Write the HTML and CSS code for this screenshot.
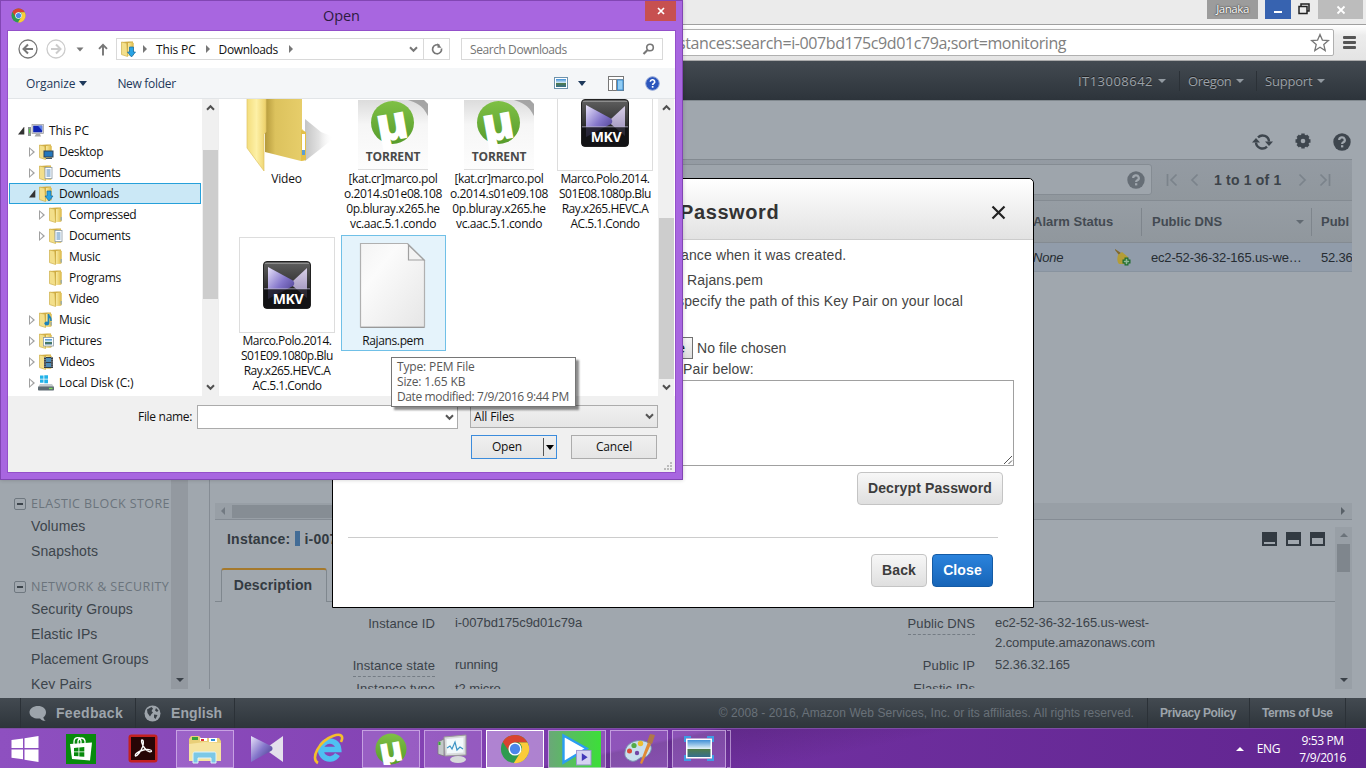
FILE: index.html
```html
<!DOCTYPE html>
<html lang="en">
<head>
<meta charset="utf-8">
<title>EC2 Management Console</title>
<link rel="stylesheet" href="styles.css">
</head>
<body>
<svg width="0" height="0" class="defs">
  <defs>
    <linearGradient id="gold" x1="0" x2="1"><stop offset="0" stop-color="#f8e9a0"/><stop offset=".5" stop-color="#ecd271"/><stop offset="1" stop-color="#d9b647"/></linearGradient>
    <linearGradient id="goldBig" x1="0" x2="1"><stop offset="0" stop-color="#b59a3c"/><stop offset=".25" stop-color="#dcc25d"/><stop offset="1" stop-color="#e8cf6c"/></linearGradient>
    <linearGradient id="flap" x1="0" x2="1"><stop offset="0" stop-color="#f3dd7c"/><stop offset=".5" stop-color="#fdf0a6"/><stop offset="1" stop-color="#ecd068"/></linearGradient>
    <linearGradient id="black" x2="0" y2="1"><stop offset="0" stop-color="#606060"/><stop offset=".55" stop-color="#2e2e2e"/><stop offset=".58" stop-color="#151515"/><stop offset="1" stop-color="#111"/></linearGradient>
    <linearGradient id="violet" x1="0" x2="1" y2="1"><stop offset="0" stop-color="#e9e4fa"/><stop offset=".5" stop-color="#8577cb"/><stop offset="1" stop-color="#3f3283"/></linearGradient>
    <linearGradient id="lilac" x1="0" x2="0" y2="1"><stop offset="0" stop-color="#d9d0e8"/><stop offset="1" stop-color="#9488b5"/></linearGradient>
    <linearGradient id="green" x2="0" y2="1"><stop offset="0" stop-color="#7fc045"/><stop offset="1" stop-color="#569c2c"/></linearGradient>
    <linearGradient id="paper" x2="1" y2="1"><stop offset="0" stop-color="#f4f4f4"/><stop offset=".3" stop-color="#fbfbfb"/><stop offset="1" stop-color="#e6e6e6"/></linearGradient>
    <linearGradient id="tbg" x2="0" y2="1"><stop offset="0" stop-color="#dcdcdc"/><stop offset=".35" stop-color="#f6f6f6"/><stop offset="1" stop-color="#fdfdfd"/></linearGradient>
    <linearGradient id="sky" x2="0" y2="1"><stop offset="0" stop-color="#3f8fd8"/><stop offset=".5" stop-color="#dceef6"/><stop offset=".55" stop-color="#4f7a4d"/><stop offset="1" stop-color="#356f8e"/></linearGradient>
    <linearGradient id="shade" x1="0" x2="1"><stop offset="0" stop-color="#c4c4c4"/><stop offset=".5" stop-color="#e2e2e2"/><stop offset="1" stop-color="#fff" stop-opacity="0"/></linearGradient>
    <symbol id="folder" viewBox="0 0 16 16">
      <path d="M1.500 1L9 .5h4v14H7z" fill="#cfab40"/><path d="M8 2l4.700-.8 1 1v12L8 15z" fill="url(#gold)"/><path d="M1.500 1l5.300 1.200.8 13.300-6.100-1.900z" fill="#f3df8a" stroke="#cfb04c" stroke-width=".7"/><path d="M12.600 10h1.200v3.500h-1.200z" fill="#8fa9b5"/>
    </symbol>
    <symbol id="chrome" viewBox="0 0 32 32">
      <circle cx="16" cy="16" r="15" fill="#2e9b4f"/>
      <path d="M3 8.500A15 15 0 0 1 29.300 9H16a7 7 0 0 0-6.400 9.500z" fill="#d9432f"/>
      <path d="M29.300 9a15 15 0 0 1-14.600 22l7.200-11.500A7 7 0 0 0 20 9z" fill="#fbcb3a"/>
      <circle cx="16" cy="16" r="7" fill="#fff"/><circle cx="16" cy="16" r="5.500" fill="#4b86ea"/>
    </symbol>
    <symbol id="chev" viewBox="0 0 10 8"><path d="M1 1.500l4 4 4-4" fill="none" stroke="currentColor" stroke-width="2.300"/></symbol>
    <symbol id="help" viewBox="0 0 18 18"><circle cx="9" cy="9" r="8.700" fill="currentColor"/><path d="M6.200 7a2.800 2.600 0 1 1 4.200 2.200c-.9.600-1.300.9-1.300 1.900" fill="none" stroke="#a0a7ae" stroke-width="2.200"/><rect x="8" y="12.200" width="2.300" height="2.200" fill="#a0a7ae"/></symbol>
    <symbol id="mkv" viewBox="0 0 48 48">
      <rect x=".5" y=".5" width="47" height="47" rx="3.500" fill="url(#black)" stroke="#222"/>
      <path d="M2 2.500h44" stroke="#999" stroke-width=".8"/>
      <path d="M44 7v30L31 26c-3-2-3-4 0-7z" fill="url(#lilac)"/>
      <path d="M5 6l24 13c2.500 1.500 3 4 1 6L5 38z" fill="url(#violet)"/>
      <path d="M1 28h46v19H1z" fill="#121216" opacity=".82"/><path d="M1 27.800h46" stroke="#b8b3cc" stroke-width=".8"/>
      <text x="25" y="42.500" text-anchor="middle" class="mkv-text">MKV</text>
    </symbol>
    <symbol id="torrent" viewBox="0 0 70 70">
      <path d="M0 0h66l4 4v66H0z" fill="url(#tbg)"/><path d="M50 0h16l4 4v12C64 4 58 3 50 0z" fill="#8b8b8b" opacity=".7"/>
      <path d="M0 69.500h70" stroke="#ddd"/>
      <circle cx="34.500" cy="22.500" r="21.500" fill="url(#green)"/>
      <text x="34.500" y="35" text-anchor="middle" transform="translate(0 5) rotate(-10 35 23)" class="mu-text">µ</text>
      <text x="35" y="61" text-anchor="middle" class="tor-text">TORRENT</text>
    </symbol>
  </defs>
</svg>

<div class="browser">
  <div class="tabstrip">
    <span class="user">Janaka</span>
    <span class="win-min"><i></i></span>
    <svg class="win-max" width="12" height="12" viewBox="0 0 12 12"><path d="M3 3V1h8v7H9M1 3.500h8v7H1z" fill="none" stroke="#222" stroke-width="1.500"/></svg>
    <span class="win-x"><svg width="10" height="10" viewBox="0 0 10 10"><path d="M1.500 1.500l7 7m0-7l-7 7" stroke="#fff" stroke-width="1.800"/></svg></span>
  </div>
  <div class="omnibar">
    <div class="omnibox"><span class="url">stances:search=i-007bd175c9d01c79a;sort=monitoring</span>
      <svg width="20" height="19" viewBox="0 0 20 19"><path d="M10 1.500l2.400 5.600 6 .5-4.600 4 1.400 5.900-5.200-3.200-5.200 3.200 1.400-5.900-4.600-4 6-.5z" fill="#fff" stroke="#777" stroke-width="1.300"/></svg>
    </div>
    <span class="burger"><i></i><i></i><i></i></span>
  </div>

  <div class="aws-nav">
    <span class="nav-item n1">IT13008642<i class="caret"></i></span>
    <span class="nav-item n2">Oregon<i class="caret"></i></span>
    <span class="nav-item n3">Support<i class="caret"></i></span>
  </div>

  <div class="aws-body">
    <div class="side">
      <div class="side-list">
        <div class="side-head"><i class="box"></i><span>ELASTIC BLOCK STORE</span></div>
        <div class="side-item s1">Volumes</div>
        <div class="side-item s2">Snapshots</div>
        <div class="side-head second"><i class="box"></i><span>NETWORK &amp; SECURITY</span></div>
        <div class="side-item">Security Groups</div>
        <div class="side-item">Elastic IPs</div>
        <div class="side-item">Placement Groups</div>
        <div class="side-item">Key Pairs</div>
      </div>
      <div class="side-scroll"><i class="tri-down"></i></div>
    </div>

    <div class="main">
      <div class="tools">
        <svg width="21" height="18" viewBox="0 0 21 18"><g fill="none" stroke="#3e464e" stroke-width="2.400"><path d="M4 9.500a6.500 6.300 0 0 0 11 4.200"/><path d="M17 8.500a6.500 6.300 0 0 0-11-4.200"/></g><path d="M0 9.500h8L4 5zM13 8.500h8l-4 4.500z" fill="#3e464e"/></svg>
        <svg class="gear" width="16" height="16" viewBox="0 0 16 16"><circle cx="8" cy="8" r="4.400" fill="none" stroke="#3e464e" stroke-width="4"/><path d="M8 .5v15M.5 8h15M2.700 2.700l10.600 10.600M13.300 2.700L2.700 13.300" stroke="#3e464e" stroke-width="3.400"/><circle cx="8" cy="8" r="2.300" fill="#a0a7ae"/></svg>
        <svg width="18" height="18" color="#3e464e"><use href="#help"/></svg>
      </div>
      <div class="filter">
        <div class="search"><svg width="18" height="18" color="#666e76"><use href="#help"/></svg></div>
        <div class="pager">
          <svg width="12" height="14" viewBox="0 0 12 14"><path d="M1.500 1v12M10.500 1.500L5 7l5.500 5.500" fill="none" stroke="#7b838b" stroke-width="1.700"/></svg>
          <svg class="p2" width="9" height="14" viewBox="0 0 9 14"><path d="M7.500 1.500L2 7l5.500 5.500" fill="none" stroke="#7b838b" stroke-width="1.700"/></svg>
          <b>1 to 1 of 1</b>
          <svg class="p3" width="9" height="14" viewBox="0 0 9 14"><path d="M1.500 1.500L7 7l-5.500 5.500" fill="none" stroke="#7b838b" stroke-width="1.700"/></svg>
          <svg class="p4" width="12" height="14" viewBox="0 0 12 14"><path d="M10.500 1v12M1.500 1.500L7 7l-5.500 5.500" fill="none" stroke="#7b838b" stroke-width="1.700"/></svg>
        </div>
      </div>
      <div class="thead">
        <div class="c1">Alarm Status</div><div class="c2"><span>Public DNS</span><i class="caret grey"></i></div><div class="c3">Publ</div>
      </div>
      <div class="trow">
        <div class="c1"><em>None</em>
          <svg width="17" height="17" viewBox="0 0 17 17"><path d="M1 0l6 4-2 2-4-5z" fill="#80682c"/><path d="M4 6l4-3 6 5-1 7H5c-2-2-2-6-1-9z" fill="#b49d36"/><path d="M8.500 12.500h8M12.500 8.500v8" stroke="#1d6b2c" stroke-width="4"/><path d="M9.800 12.500h5.400M12.500 9.800v5.400" stroke="#90b896" stroke-width="1.600"/></svg>
        </div><div class="c2"><span>ec2-52-36-32-165.us-we…</span></div><div class="c3">52.36</div>
      </div>
      <div class="space"></div>
      <div class="hscroll"><i class="tri-left"></i><span class="hthumb"></span><i class="tri-right"></i></div>
      <div class="lower">
        <div class="lower-main">
          <div class="inst"><b>Instance:</b><i class="blue"></i><b>i-007</b>
            <span class="panes"><i class="pa"></i><i class="pb"></i><i class="pc"></i></span>
          </div>
          <div class="tabs"><i class="stub"></i><div class="tab">Description</div><i class="rest"></i></div>
          <div class="details">
            <div class="dcol left">
              <div class="k">Instance ID</div><div class="v">i-007bd175c9d01c79a</div>
              <div class="k st"><u>Instance state</u></div><div class="v st">running</div>
              <div class="k">Instance type</div><div class="v">t2.micro</div>
            </div>
            <div class="dcol right">
              <div class="k"><u>Public DNS</u></div><div class="v">ec2-52-36-32-165.us-west-<br>2.compute.amazonaws.com</div>
              <div class="k">Public IP</div><div class="v">52.36.32.165</div>
              <div class="k">Elastic IPs</div><div class="v"></div>
            </div>
          </div>
        </div>
        <div class="vscroll"><i class="tri-up"></i><span></span><i class="tri-down"></i></div>
      </div>
    </div>
  </div>

  <div class="aws-foot">
    <span class="f1"><svg width="18" height="17" viewBox="0 0 18 17"><path d="M9 1c4.600 0 8 2.600 8 6.200 0 2.400-1.200 4-2.600 5 0 1.500 1 2.800 2.400 3.600-2.500.2-4.600-.8-5.700-2.300C5 14.200.5 11.300.5 7.200.5 3.600 4.400 1 9 1z" fill="#9da4ab"/></svg>Feedback</span>
    <span class="f2"><svg width="17" height="17" viewBox="0 0 17 17"><circle cx="8.500" cy="8.500" r="8" fill="#9da4ab"/><path d="M3 4.500L7.500 2l1.500 1.500L7.500 6l1.500 1.500L7.500 9 6 11.500 3.500 8zM12 3l2.500 2.500L13 7l-2-1.500zM10 9.500l3.500.5-2 4-1.500-1.500z" fill="#383f46"/></svg>English</span>
    <span class="copy">© 2008 - 2016, Amazon Web Services, Inc. or its affiliates. All rights reserved.</span>
    <span class="f3">Privacy Policy</span><span class="f4">Terms of Use</span>
  </div>
</div>

<div class="modal">
  <div class="modal-head"><b>Password</b><svg width="15" height="15" viewBox="0 0 15 15"><path d="M1.500 1.500l12 12m0-12l-12 12" stroke="#222" stroke-width="2.200"/></svg></div>
  <div class="modal-body">
    <p class="m1">ance when it was created.</p>
    <p class="m2">Rajans.pem</p>
    <p class="m3">specify the path of this Key Pair on your local</p>
    <div class="chooser"><span class="fbtn">Choose File</span><span>No file chosen</span></div>
    <p class="m4">Pair below:</p>
    <div class="area"><svg width="10" height="10" viewBox="0 0 10 10"><path d="M1 9l8-8M5.500 9L9 5.500" stroke="#555" stroke-width="1"/></svg></div>
    <div class="row-r"><span class="btn decrypt">Decrypt Password</span></div>
  </div>
  <div class="modal-foot"><span class="btn back">Back</span><span class="btn close">Close</span></div>
</div>

<div class="dialog">
  <div class="dtitle"><svg class="dico" width="15" height="15"><use href="#chrome"/></svg><span>Open</span>
    <i class="dclose"><svg width="8" height="8" viewBox="0 0 8 8"><path d="M1 1l6 6m0-6L1 7" stroke="#fff" stroke-width="1.700"/></svg></i></div>
  <div class="dinner">
    <div class="dnav">
      <svg width="20" height="20" viewBox="0 0 20 20"><circle cx="10" cy="10" r="9" fill="none" stroke="#777" stroke-width="1.300"/><path d="M15 10H6M10 5.500L5.500 10l4.500 4.500" fill="none" stroke="#777" stroke-width="2"/></svg>
      <svg class="fw" width="20" height="20" viewBox="0 0 20 20"><circle cx="10" cy="10" r="9" fill="none" stroke="#ccc" stroke-width="1.300"/><path d="M5 10h9M10 5.500l4.500 4.500-4.500 4.500" fill="none" stroke="#ccc" stroke-width="2"/></svg>
      <svg class="dd" width="8" height="5" viewBox="0 0 8 5"><path d="M.5.500h7L4 4.500z" fill="#777"/></svg>
      <svg class="up" width="10" height="13" viewBox="0 0 10 13"><path d="M5 12.500V2M1 5.800l4-4 4 4" fill="none" stroke="#777" stroke-width="1.900"/></svg>
      <div class="addr">
        <svg class="fo" width="16" height="17" viewBox="0 0 16 17"><use href="#folder" width="16" height="16"/><path d="M9.500 6h4v5h2l-4 5-4-5h2z" fill="#29a3e4" stroke="#14699f" stroke-width=".7"/></svg>
        <i class="ar"></i><span class="a1">This PC</span><i class="ar"></i><span class="a2">Downloads</span><i class="ar"></i>
        <svg class="ch" width="9" height="7" color="#777"><use href="#chev"/></svg>
        <span class="ref"><svg width="12" height="12" viewBox="0 0 12 12"><path d="M10.500 5.500a4.500 4.500 0 1 1-2-3" fill="none" stroke="#777" stroke-width="1.700"/><path d="M6.500 0v4.800h4z" fill="#777"/></svg></span>
      </div>
      <div class="dsearch"><span>Search Downloads</span><svg width="13" height="12" viewBox="0 0 13 12"><circle cx="8" cy="4.500" r="3.300" fill="none" stroke="#777" stroke-width="1.600"/><path d="M5.500 7L1.500 11" stroke="#777" stroke-width="2.200"/></svg></div>
    </div>
    <div class="dtool"><span class="t1">Organize</span><i class="tcar"></i><span class="t2">New folder</span>
      <svg class="v1" width="14" height="12" viewBox="0 0 14 12"><rect x=".5" y=".5" width="13" height="11" fill="#fff" stroke="#6e93ad"/><rect x="2" y="2" width="10" height="8" fill="url(#sky)"/></svg>
      <i class="tcar two"></i>
      <svg class="v2" width="16" height="15" viewBox="0 0 16 15"><rect x=".5" y=".5" width="15" height="14" fill="#fff" stroke="#777"/><path d="M.5 3.500h15M4.500 3.500v11" stroke="#888"/><path d="M8.500 3.500v11" stroke="#888"/><rect x="9.500" y="4" width="5.500" height="10" fill="#8fccf4" stroke="#3d8fd4"/></svg>
      <svg class="v3" width="15" height="15" viewBox="0 0 15 15"><circle cx="7.500" cy="7.500" r="6.800" fill="#2c56bd" stroke="#93a6d6"/><path d="M5.300 5.800a2.200 2 0 1 1 3.300 1.700c-.8.500-1 .9-1 1.600" fill="none" stroke="#fff" stroke-width="1.600"/><rect x="6.800" y="10" width="1.700" height="1.700" fill="#fff"/></svg>
    </div>
    <div class="dmain">
      <div class="tree">
        <div class="tr l0"><i class="op"></i><svg width="16" height="16" viewBox="0 0 16 16"><path d="M0 4h3v9H0z" fill="#8a938f"/><path d="M1 6h1v4H1z" fill="#5c4"/><rect x="4" y="1.500" width="11.500" height="9" fill="#ddd" stroke="#999" stroke-width=".7"/><rect x="5.200" y="2.700" width="9" height="6.600" fill="#1226b5"/><path d="M10 2.700h4.200v5z" fill="#5e83e8"/><path d="M8 11h4l1 2.500H6.500z" fill="#aaa"/></svg><span>This PC</span></div>
        <div class="tr l1"><i class="cl"></i><svg width="16" height="16" viewBox="0 0 16 16"><use href="#folder" width="16" height="16"/><rect x="6" y="7" width="9" height="6" fill="#2377bd" stroke="#345"/><path d="M8 14.500h6" stroke="#456"/></svg><span>Desktop</span></div>
        <div class="tr l1"><i class="cl"></i><svg width="16" height="16" viewBox="0 0 16 16"><use href="#folder" width="16" height="16"/><rect x="7" y="2.500" width="7" height="11" fill="#fff" stroke="#8a99a5" stroke-width=".8"/><path d="M8.500 5h4M8.500 7h4M8.500 9h4M8.500 11h4" stroke="#4a85ba"/></svg><span>Documents</span></div>
        <div class="tr l1 sel"><i class="op"></i><svg width="16" height="16" viewBox="0 0 16 16"><use href="#folder" width="16" height="16"/><path d="M9 5h4v5h2l-4 5-4-5h2z" fill="#29a3e4" stroke="#14699f" stroke-width=".7"/></svg><span>Downloads</span></div>
        <div class="tr l2"><i class="cl"></i><svg width="16" height="16"><use href="#folder"/></svg><span>Compressed</span></div>
        <div class="tr l2"><i class="cl"></i><svg width="16" height="16" viewBox="0 0 16 16"><use href="#folder" width="16" height="16"/><rect x="7" y="2.500" width="7" height="11" fill="#fff" stroke="#8a99a5" stroke-width=".8"/><path d="M8.500 5h4M8.500 7h4M8.500 9h4M8.500 11h4" stroke="#4a85ba"/></svg><span>Documents</span></div>
        <div class="tr l2"><i class="no"></i><svg width="16" height="16"><use href="#folder"/></svg><span>Music</span></div>
        <div class="tr l2"><i class="no"></i><svg width="16" height="16"><use href="#folder"/></svg><span>Programs</span></div>
        <div class="tr l2"><i class="no"></i><svg width="16" height="16"><use href="#folder"/></svg><span>Video</span></div>
        <div class="tr l1"><i class="cl"></i><svg width="16" height="16" viewBox="0 0 16 16"><use href="#folder" width="16" height="16"/><path d="M10.500 2v9M10.500 3c1 2.500 3 2 2.500 6" fill="none" stroke="#1e83b8" stroke-width="1.700"/><ellipse cx="8.800" cy="11.500" rx="2.400" ry="2" fill="#1e83b8"/></svg><span>Music</span></div>
        <div class="tr l1"><i class="cl"></i><svg width="16" height="16" viewBox="0 0 16 16"><use href="#folder" width="16" height="16"/><rect x="5.500" y="4.500" width="10" height="8.500" fill="#fff" stroke="#8a99a5" stroke-width=".8"/><rect x="7" y="6" width="7" height="5.500" fill="url(#sky)"/></svg><span>Pictures</span></div>
        <div class="tr l1"><i class="cl"></i><svg width="16" height="16" viewBox="0 0 16 16"><use href="#folder" width="16" height="16"/><rect x="6" y="3" width="9" height="11" fill="#333c44"/><rect x="8" y="4" width="5" height="4" fill="#4c8cb8"/><rect x="8" y="9" width="5" height="4" fill="#4c8cb8"/><path d="M7 3v11M14 3v11" stroke="#ddd" stroke-width=".9" stroke-dasharray="1 1.200"/></svg><span>Videos</span></div>
        <div class="tr l1"><i class="cl"></i><svg width="16" height="16" viewBox="0 0 16 16"><path d="M2 .5h3.500v3.300H2zM6.300.200h3.700v3.600H6.300zM2 4.600h3.500v3.200H2zM6.300 4.600h3.700v3.600H6.300z" fill="#22b2e8"/><path d="M2 9h12l2 3H0z" fill="#c5cacd"/><rect y="11.500" width="16" height="4" rx=".8" fill="#5e6b72"/><path d="M11 13.500h3.500" stroke="#7be05a" stroke-width="1.300"/></svg><span class="disk">Local Disk (C:)</span></div>
      </div>
      <div class="sb sb1"><svg width="9" height="7"><use href="#chev" transform="rotate(180 4.500 3.500)"/></svg><span></span><svg width="9" height="7"><use href="#chev"/></svg></div>
      <div class="files">
        <div class="file"><div class="pic"><svg width="96" height="96" viewBox="0 0 96 96"><path d="M66 86l28-22c1-3-8-5-12-7L66 44z" fill="url(#shade)"/><path d="M26 10h37v44l4 4v27l-5 1-36-9z" fill="url(#goldBig)"/><path d="M62 55l5 2v28l-5 1z" fill="#e4c04a"/><path d="M63 59h3v21h-3z" fill="#fff"/><path d="M63 75h3v5h-3z" fill="#5c9dd4"/><path d="M8 8h19v49l-2 2v37L8 73z" fill="url(#flap)" stroke="#e0c467" stroke-width=".7"/></svg></div><div class="nm vid">Video</div></div>
        <div class="file"><div class="pic"><svg class="tor" width="70" height="70"><use href="#torrent"/></svg></div><div class="nm">[kat.cr]marco.pol<br>o.2014.s01e08.108<br>0p.bluray.x265.he<br>vc.aac.5.1.condo</div></div>
        <div class="file"><div class="pic"><svg class="tor" width="70" height="70"><use href="#torrent"/></svg></div><div class="nm">[kat.cr]marco.pol<br>o.2014.s01e09.108<br>0p.bluray.x265.he<br>vc.aac.5.1.condo</div></div>
        <div class="file"><div class="pic framed"><svg width="48" height="48"><use href="#mkv"/></svg></div><div class="nm mk">Marco.Polo.2014.<br>S01E08.1080p.Blu<br>Ray.x265.HEVC.A<br>AC.5.1.Condo</div></div>
        <div class="file"><div class="pic framed"><svg width="48" height="48"><use href="#mkv"/></svg></div><div class="nm mk">Marco.Polo.2014.<br>S01E09.1080p.Blu<br>Ray.x265.HEVC.A<br>AC.5.1.Condo</div></div>
        <div class="file on"><div class="pic"><svg width="68" height="88" viewBox="0 0 68 88"><path d="M1.500 2.500h47l17 17V86h-64z" fill="url(#paper)" stroke="#b0b0b0" stroke-width="1.200"/><path d="M49.500 4v15H65z" fill="#f3f3f3" stroke="#a0a0a0" stroke-width="1.200"/><path d="M1.500 86.500h64" stroke="#999"/></svg></div><div class="nm">Rajans.pem</div></div>
      </div>
      <div class="sb sb2"><svg width="9" height="7"><use href="#chev" transform="rotate(180 4.500 3.500)"/></svg><span></span><svg width="9" height="7"><use href="#chev"/></svg></div>
    </div>
    <div class="dfoot">
      <div class="fr1"><span class="lab">File name:</span><span class="inp"><svg width="9" height="7"><use href="#chev"/></svg></span><span class="sel2">All Files<svg width="9" height="7"><use href="#chev"/></svg></span></div>
      <div class="fr2"><span class="db open"><b>Open</b><i></i></span><span class="db">Cancel</span></div>
      <svg class="grip" width="9" height="9" viewBox="0 0 9 9"><path d="M6 0h2v2H6zM3 3h2v2H3zM6 3h2v2H6zM0 6h2v2H0zM3 6h2v2H3zM6 6h2v2H6z" fill="#bbb"/></svg>
    </div>
  </div>
  <div class="tip">Type: PEM File<br>Size: 1.65 KB<br><span>Date modified: 7/9/2016 9:44 PM</span></div>
</div>

<div class="taskbar">
  <span class="start"><svg width="28" height="26" viewBox="0 0 28 26"><path d="M.5 4L12 2.400V12H.5zM13.500 2.200L27.500 0v12h-14zM.5 13.500H12v9.800L.5 21.700zM13.500 13.500h14V26l-14-2.200z" fill="#fff"/></svg></span>
  <span class="slot"><svg width="30" height="30" viewBox="0 0 30 30"><rect width="30" height="30" fill="#088a0c"/><path d="M4 10l22-1.500-2 18-18-1.500z" fill="#fff"/><path d="M8 10V8c0-5 6-6 7-1v3M12 10V7c1-4 6-4 7 0v2.500" fill="none" stroke="#fff" stroke-width="1.300"/><path d="M8 14l4.500-.5v4H8zM13.300 13.400l5-.5v4.600h-5zM8 18.300h4.500v4L8 22zM13.300 18.300h5v4.500l-5-.4z" fill="#088a0c"/></svg></span>
  <span class="slot"><svg width="30" height="30" viewBox="0 0 30 30"><rect x=".5" y=".5" width="29" height="28" rx="3" fill="#c3211f"/><rect x="3" y="3" width="24" height="23" fill="#260506"/><path d="M14 6c2 0 1.500 4 .5 7-1.500 4-5 9-7 9-1.500-2 4-5 8-6s8-.5 8 1-4 1-7-3-3.500-8-2.500-8z" fill="none" stroke="#fff" stroke-width="1.300"/></svg></span>
  <span class="slot run"><svg width="34" height="30" viewBox="0 0 34 30"><path d="M1 5l2-3h8l2 2h18l2 3v20H1z" fill="#e9cf78"/><path d="M4 3h6v3H4z" fill="#35a03a"/><path d="M12 4h7v3h-7z" fill="#fff"/><path d="M13 5h3v2h-3z" fill="#d33"/><path d="M21 4h8v4h-8z" fill="#fff"/><path d="M23 5h4v2h-4z" fill="#3292d8"/><path d="M1 10l16-2 16 1v18H1z" fill="#f6e4a0"/><path d="M5 29v-9c0-1.500 1-2 2-2h19c1.500 0 2 .5 2 2v9h-5v-5H10v5z" fill="#7cc8e6" stroke="#dff3fa"/></svg></span>
  <span class="slot"><svg width="32" height="28" viewBox="0 0 32 28"><path d="M32 1v26L18 17c-2-2-2-4 0-6z" fill="#e4e0ec"/><path d="M0 1l20 10c2 1 2 4 0 5L0 27z" fill="url(#violet)"/></svg></span>
  <span class="slot"><svg width="32" height="32" viewBox="0 0 32 32"><path d="M24.500 21.500a9 9 0 1 1 1.200-5H10" fill="none" stroke="#4fc0f2" stroke-width="5.500"/><path d="M5 30C-3 26 6 8 20 3c8-3 11 0 8 6" fill="none" stroke="#f5bf2c" stroke-width="2.600"/></svg></span>
  <span class="slot run"><svg width="32" height="32" viewBox="0 0 32 32"><circle cx="16" cy="16" r="15.500" fill="url(#green)"/><text x="16" y="26" text-anchor="middle" transform="translate(0 3) rotate(-10 16 16)" class="mu-small">µ</text></svg></span>
  <span class="slot run"><svg width="32" height="30" viewBox="0 0 32 30"><path d="M1 8l6-3v17l-6-2z" fill="#c3c8ca" stroke="#777" stroke-width=".7"/><path d="M1.500 8h2v3h-2z" fill="#3a3"/><path d="M7 3l22-2v20L8 22z" fill="#d9dcdd" stroke="#999"/><path d="M9.500 5l17-1.500v15L10 19.500z" fill="#f2f9fb"/><path d="M10 14l3-2 2 3 3-7 2 8 3-3 3 2" fill="none" stroke="#3c93c4" stroke-width="1.200"/><ellipse cx="21" cy="25.500" rx="8" ry="3.500" fill="#d7dadb"/></svg></span>
  <span class="slot run act"><svg width="30" height="30"><use href="#chrome"/></svg></span>
  <span class="slot run play"><svg width="56" height="38" viewBox="0 0 58 38"><path d="M15 5l24 13.500L15 33z" fill="#fff" stroke="#2b9df2" stroke-width="2.500"/><rect x="28.500" y="20.500" width="15" height="15" fill="#d6d3f2" stroke="#9c96d2"/><path d="M34 23.500l6 4-6 4z" fill="#4338b8"/></svg></span>
  <span class="slot run"><svg width="32" height="32" viewBox="0 0 32 32"><path d="M2 19C3 10 13 6 21 8s9 8 5 13-6 2-9 4-6 5-11 2-4-6-4-8z" fill="#c9dfee" stroke="#7795ae"/><circle cx="6.500" cy="18" r="2.500" fill="#d94b37"/><circle cx="11" cy="12.500" r="2.600" fill="#53ab45"/><circle cx="17.500" cy="10.500" r="2.700" fill="#edbd31"/><circle cx="14" cy="20" r="2.200" fill="#7246a5"/><path d="M25 9l-8 21 2 1 9-20z" fill="#e08a35"/><path d="M24 9l3-8 5 1-3 9z" fill="#b07848"/></svg></span>
  <span class="slot run last"><svg width="30" height="25" viewBox="0 0 30 25"><rect x="2" y="2.500" width="26" height="20" fill="#fff"/><rect x="3.500" y="4" width="23" height="17" fill="url(#sky)"/><path d="M1 6V1h6M23 1h6v5M29 19v5h-6M7 24H1v-5" fill="none" stroke="#3f9ce4" stroke-width="2"/></svg></span><i class="edge"></i>
  <span class="tray"><i class="tri"></i><span class="eng">ENG</span><span class="clock"><span>9:53 PM</span><span class="date">7/9/2016</span></span></span>
</div>
</body>
</html>
```
FILE: styles.css
```css
* { box-sizing: border-box; }
body { margin: 0; width: 1366px; height: 768px; overflow: hidden; position: relative; font-family: "Liberation Sans", sans-serif; background: #a0a7ae; }
svg { display: block; flex: none; }
i { font-style: normal; flex: none; }
p { margin: 0; }
.defs { position: absolute; }
.mkv-text { font: bold 14px "Open Sans", sans-serif; fill: #fff; letter-spacing: -.3px; }
.mu-text { font: 800 48px "Open Sans", sans-serif; fill: #fff; }
.mu-small { font: 800 35px "Open Sans", sans-serif; fill: #fff; }
.tor-text { font: bold 12px "Open Sans", sans-serif; fill: #4a4a4a; letter-spacing: -.2px; }

/* Browser chrome */
.browser { display: flex; flex-direction: column; height: 728px; white-space: nowrap; }
.tabstrip { height: 24px; background: #ebebeb; display: flex; justify-content: flex-end; align-items: flex-start; padding-right: 3px; flex: none; }
.user { width: 51px; height: 19px; background: #9c9c9c; color: #fff; font: 11.500px/18px "Open Sans", sans-serif; letter-spacing: -.45px; text-align: center; text-shadow: 0 0 2px #333, 0 0 1px #333; margin-right: 7px; }
.win-min { width: 26px; height: 19px; background: #3763b0; display: flex; justify-content: center; align-items: flex-end; padding-bottom: 6px; }
.win-min i { width: 8px; height: 2px; background: #fff; }
.win-max { margin: 3px 8px 0 7px; }
.win-x { width: 45px; height: 19px; background: #bcbcbc; display: flex; align-items: center; justify-content: center; }
.omnibar { height: 37px; flex: none; background: linear-gradient(#fff, #ececec 30%, #e4e4e4); border-top: 1px solid #9f9f9f; border-bottom: 1px solid #ababab; display: flex; padding: 4px 10px 4px 0; }
.omnibox { width: 1334px; background: #fff; border: 1px solid #b0b0b0; border-radius: 2px; display: flex; align-items: center; justify-content: space-between; padding: 0 3px 0 677px; }
.url { font: 16px/26px "Open Sans", sans-serif; color: #808080; letter-spacing: -.4px; }
.burger { width: 13px; margin: 7px 0 0 9px; display: flex; flex-direction: column; gap: 2px; }
.burger i { height: 3px; background: #555; border-radius: 1px; }

/* AWS header */
.aws-nav { height: 40px; flex: none; background: linear-gradient(#434a51, #2d343b); border-bottom: 1px solid #81898f; display: flex; justify-content: flex-end; align-items: center; padding-right: 42px; font: 13px/20px "Open Sans", sans-serif; color: #9aa1a8; text-shadow: 0 -1px #222; }
.nav-item { display: flex; align-items: center; padding: 0 0 0 8px; }
.n1 { padding-right: 13px; letter-spacing: .48px; }
.n2, .n3 { border-left: 1px solid #2b3137; }
.n2 { width: 77px; letter-spacing: -.35px; }
.n3 { width: 68px; letter-spacing: -.2px; }
.caret { width: 0; height: 0; border: 4px solid transparent; border-top-color: #929aa1; border-bottom: 0; margin-left: 5px; }
.caret.grey { border-top-color: #626a72; margin: 0 7px 0 auto; }

.aws-body { flex: none; height: 597px; display: flex; padding-bottom: 9px; }
.side { width: 188px; display: flex; margin-right: 21px; flex: none; overflow: hidden; }
.side-list { width: 171px; padding: 394px 0 0 14px; color: #3c444b; font-size: 14px; letter-spacing: .1px; }
.side-head { height: 18px; display: flex; align-items: center; gap: 5px; font: 12.500px/18px "Open Sans", sans-serif; color: #6b747c; letter-spacing: .42px; margin-bottom: 1px; }
.side-head.second { margin: 14px 0 0; padding-bottom: 1px; height: 19px; letter-spacing: .38px; }
.box { width: 12px; height: 12px; border: 1px solid #6f7880; border-radius: 2px; background: linear-gradient(#3c444b, #3c444b) center / 6px 2px no-repeat; }
.side-item { padding-left: 17px; height: 25px; line-height: 25px; }
.side-scroll { width: 17px; background: #9399a0; display: flex; align-items: flex-end; justify-content: center; padding-bottom: 7px; }
.tri-down { width: 0; height: 0; border: 4px solid transparent; border-top-color: #3a4148; border-bottom: 0; }
.tri-up { width: 0; height: 0; border: 4px solid transparent; border-bottom-color: #6b737a; border-top: 0; }
.tri-left { width: 0; height: 0; border: 4px solid transparent; border-right-color: #727a82; border-left: 0; }
.tri-right { width: 0; height: 0; border: 4px solid transparent; border-left-color: #596168; border-right: 0; }

.main { width: 1143px; border-left: 1px solid #858c94; display: flex; flex-direction: column; overflow: hidden; }
.tools { height: 58px; flex: none; display: flex; justify-content: flex-end; align-items: flex-end; padding: 0 1px 8px 0; }
.gear { margin: 0 22px 2px 22px; }
.filter { height: 41px; flex: none; background: linear-gradient(#949ba3, #90979d); border-top: 1px solid #838a91; display: flex; padding-top: 4px; }
.search { width: 942px; height: 31px; background: #9ea5ac; border: 1px solid #858c93; border-radius: 0 3px 3px 0; display: flex; justify-content: flex-end; align-items: center; padding-right: 6px; }
.pager { display: flex; align-items: center; height: 31px; padding-left: 14px; font-size: 14px; color: #3c4349; letter-spacing: .2px; }
.p2 { margin: 0 15px 0 12px; }
.p3 { margin: 0 12px 0 16px; }
.thead, .trow { display: flex; flex: none; align-items: center; padding-left: 823px; }
.thead { height: 43px; background: linear-gradient(#969da4, #90979d); border-top: 1px solid #848b92; border-bottom: 1px solid #848b92; font: bold 13px/20px "Liberation Sans", sans-serif; color: #434a52; letter-spacing: 0; }
.trow { height: 29px; background: #919caa; border-bottom: 1px solid #88939f; font-size: 13px; color: #262c32; letter-spacing: -.18px; }
.c1 { width: 109px; flex: none; display: flex; align-items: center; justify-content: space-between; padding-right: 11px; }
.c2 { width: 170px; flex: none; display: flex; align-items: center; padding-left: 9px; }
.c3 { flex: none; padding-left: 9px; }
.thead .c1 { border-right: 1px solid #7e858c; height: 28px; padding-right: 0; }
.thead .c2 { border-right: 1px solid #7e858c; height: 28px; padding-left: 10px; }
.space { height: 231px; flex: none; }
.hscroll { height: 17px; margin-left: 5px; flex: none; border-bottom: 1px solid #858c94; background: #989fa6; display: flex; align-items: center; padding: 0 7px 0 6px; }
.hthumb { width: 500px; height: 13px; background: #868d94; margin: 0 auto 0 7px; }
.lower { flex: 1; display: flex; min-height: 0; }
.lower-main { width: 1125px; display: flex; flex-direction: column; overflow: hidden; }
.inst { height: 39px; margin-top: 2px; flex: none; display: flex; align-items: center; padding: 0 10px 6px 17px; font-size: 14px; color: #333a41; letter-spacing: .22px; }
.blue { width: 5px; height: 15px; background: #426c96; margin: 0 4px 0 5px; }
.panes { display: flex; gap: 9px; margin-left: auto; }
.panes i { width: 15px; height: 14px; border: 2px solid #323a42; background: #a0a7ae; }
.pa { border-top-width: 10px !important; }
.pb { border-top-width: 8px !important; }
.pc { border-top-width: 6px !important; }
.tabs { height: 34px; margin-top: 7px; flex: none; display: flex; align-items: flex-end; }
.stub { width: 6px; margin-left: 5px; border-bottom: 1px solid #7f878e; }
.tab { width: 106px; height: 34px; border: 1px solid #7f878e; border-top: 2px solid #a5792c; border-bottom: 0; border-radius: 3px 3px 0 0; font: bold 14px/30px "Liberation Sans", sans-serif; color: #333a41; text-align: center; letter-spacing: .15px; padding-right: 2px; }
.rest { flex: 1; border-bottom: 1px solid #7f878e; }
.details { flex: 1; display: flex; overflow: hidden; min-height: 0; font-size: 13px; line-height: 20px; color: #3b4249; letter-spacing: .1px; padding-top: 12px; }
.dcol { display: grid; grid-template-columns: 120px 1fr; column-gap: 20px; grid-auto-rows: min-content; row-gap: 2px; flex: none; }
.dcol.left { width: 540px; margin-left: 105px; }
.dcol.right { width: 420px; }
.dcol .k:nth-child(5), .dcol .v:nth-child(6) { margin-top: 1px; }
.dcol.right .k:nth-child(3) { margin-top: 1px; }
.dcol.right .v:nth-child(4) { margin-top: 0; }
.k { text-align: right; }
.v { margin-top: -1px; letter-spacing: -.08px; }
.st { margin-top: 20px; }
.v.st { margin-top: 19px; }
.k u { text-decoration: none; border-bottom: 1px dashed #747c84; padding-bottom: 3px; }
.vscroll { width: 17px; background: #989fa6; margin-top: 7px; display: flex; flex-direction: column; align-items: center; padding: 6px 0 7px; }
.vscroll span { width: 13px; height: 28px; background: #7f868d; margin: 7px 0 auto; }

.aws-foot { height: 30px; flex: none; background: linear-gradient(#434a51, #2e353b); display: flex; align-items: center; padding-left: 20px; color: #9da4ab; font: bold 14px/30px "Liberation Sans", sans-serif; }
.aws-foot > span { height: 30px; display: flex; align-items: center; }
.f1 { width: 115px; border-left: 1px solid #2b3137; padding-left: 8px; gap: 9px; letter-spacing: .3px; }
.f2 { width: 100px; border-left: 1px solid #2b3137; border-right: 1px solid #2b3137; padding-left: 8px; gap: 10px; letter-spacing: .1px; }
.aws-foot .copy { width: 912px; font: 12px/30px "Liberation Sans", sans-serif; color: #697179; justify-content: flex-end; padding-right: 13px; letter-spacing: .05px; }
.f3, .f4 { font-size: 12px; border-left: 1px solid #2b3137; padding-left: 12px; letter-spacing: -.38px; }
.f3 { width: 102px; }
.f4 { width: 97px; border-right: 1px solid #2b3137; }

/* Password modal */
.modal { position: absolute; left: 332px; top: 178px; width: 702px; height: 430px; background: #fff; border: 1px solid #000; border-radius: 5px 5px 0 0; white-space: nowrap; color: #444; font-size: 14px; display: flex; flex-direction: column; }
.modal-head { height: 61px; border-bottom: 1px solid #ccc; background: linear-gradient(#fff, #e2e2e2); border-radius: 5px 5px 0 0; display: flex; align-items: center; justify-content: space-between; padding: 6px 27px 0 347px; font-size: 20px; color: #333; flex: none; letter-spacing: .6px; }
.modal-body { padding: 5px 19px 0 0; height: 297px; line-height: 20px; flex: none; letter-spacing: .14px; }
.m1 { padding-left: 348px; }
.m2 { padding-left: 354px; margin-top: 5px; }
.m3 { padding-left: 344px; margin-top: 1px; }
.m4 { padding-left: 350px; }
.chooser { display: flex; align-items: center; gap: 4px; height: 22px; margin: 26px 0 0; letter-spacing: .05px; }
.fbtn { width: 360px; text-align: right; border: 1px solid #707070; background: linear-gradient(#f6f6f6, #ddd); color: #111; padding-right: 7px; }
.area { height: 86px; border: 1px solid #a0a0a0; display: flex; align-items: flex-end; justify-content: flex-end; margin: 1px 0 0 15px; }
.row-r { display: flex; justify-content: flex-end; padding: 6px 11px 0 0; }
.btn { height: 33px; border: 1px solid #c4c4c4; border-radius: 4px; background: linear-gradient(#f7f7f7, #dfdfdf); font-weight: bold; line-height: 31px; text-align: center; color: #3c3c3c; letter-spacing: .12px; }
.decrypt { width: 146px; }
.modal-foot { margin: 0 35px 0 15px; border-top: 1px solid #ccc; display: flex; justify-content: flex-end; gap: 5px; padding: 16px 5px 0 0; }
.back { width: 56px; }
.close { width: 61px; background: linear-gradient(#2b83dc, #1765b8); border-color: #145ba5; color: #fff; }

/* File dialog */
.dialog { position: absolute; left: 0; top: 0; width: 683px; height: 480px; background: #a866e0; border: 1px solid #8246b4; padding: 0 6px 6px; font: 12px/15px "Open Sans", sans-serif; color: #111; white-space: nowrap; box-shadow: 0 0 4px rgba(0,0,0,.2); }
.dtitle { height: 29px; display: flex; justify-content: center; align-items: center; font-size: 14.500px; color: #2d1b40; position: relative; letter-spacing: -.1px; }
.dico { position: absolute; left: 4px; top: 7px; }
.dclose { position: absolute; right: 0; top: 0; width: 31px; height: 20px; background: #c75050; display: flex; justify-content: center; align-items: center; }
.dinner { border: 1px solid #9450ca; height: 443px; background: #fff; }
.dnav { height: 37px; display: flex; align-items: center; padding: 0 0 1px 10px; }
.fw { margin-left: 8px; }
.dd { margin-left: 10px; }
.up { margin-left: 14px; }
.addr { width: 334px; height: 22px; border: 1px solid #d9d9d9; margin-left: 8px; display: flex; align-items: center; padding: 0 0 0 3px; }
.ar { width: 0; height: 0; border: 4px solid transparent; border-left-color: #777; border-right: 0; }
.fo { margin-right: 7px; }
.a1 { margin: 0 10px 0 9px; letter-spacing: -.15px; }
.a2 { margin: 0 11px 0 9px; letter-spacing: -.35px; }
.ch { margin-left: auto; }
.ref { width: 26px; height: 20px; border-left: 1px solid #d9d9d9; margin-left: 5px; display: flex; align-items: center; justify-content: center; }
.dsearch { width: 202px; height: 22px; border: 1px solid #d9d9d9; margin-left: 11px; display: flex; align-items: center; justify-content: space-between; padding: 0 7px 0 8px; color: #757575; letter-spacing: -.43px; }
.dtool { height: 31px; background: #f4f6f8; border-bottom: 1px solid #e2e5e8; display: flex; align-items: center; padding-left: 18px; color: #1e395b; letter-spacing: -.3px; }
.t1 { letter-spacing: -.1px; }
.tcar { width: 0; height: 0; border: 4px solid transparent; border-top: 5px solid #1e395b; border-bottom: 0; margin-left: 4px; }
.t2 { margin-left: 30px; }
.v1 { margin-left: auto; }
.two { margin-left: 10px; }
.v2 { margin-left: 22px; }
.v3 { margin: 0 15px 0 21px; }
.dmain { height: 297px; display: flex; overflow: hidden; }
.tree { width: 194px; padding: 21px 1px 0 1px; flex: none; letter-spacing: -.3px; overflow: hidden; }
.tr { height: 21px; display: flex; align-items: center; }
.disk { letter-spacing: -.15px; }
.l0 { padding-left: 9px; }
.l0 svg { margin-left: 3px; }
.l0 span { margin-left: 5px; letter-spacing: -.1px; }
.l1 { padding-left: 20px; }
.l2 { padding-left: 30px; }
.sel { background: #cbe8f6; border: 1px solid #26a0da; padding-left: 19px; }
.op, .cl, .no { width: 7px; height: 8px; }
.l1 svg, .l2 svg { margin-left: 2px; }
.l1 span, .l2 span { margin-left: 5px; }
.op { clip-path: polygon(0 100%, 90% 0, 90% 100%); background: #333; }
.cl { width: 0; height: 0; border: 5px solid transparent; border-left: 6px solid #a0a0a0; border-right: 1px solid transparent; position: relative; }
.cl::after { content: ""; position: absolute; left: -5px; top: -3px; border: 3px solid transparent; border-left: 3.500px solid #fff; border-right: 0; }
.sb { width: 16px; background: #f0f0f0; color: #505050; display: flex; flex-direction: column; align-items: center; padding: 5px 0; flex: none; }
.sb span { width: 15px; background: #cdcdcd; }
.sb1 span { height: 149px; margin: 39px 0 auto; }
.sb2 span { height: 161px; margin: 107px 0 auto; }
.files { width: 440px; border-left: 1px solid #eee; margin-top: -26px; padding: 0 0 0 16px; flex: none; display: grid; grid-template-columns: repeat(4, 105px); column-gap: 1px; grid-auto-rows: 162px; overflow: hidden; }
.file { height: 116px; border: 1px solid transparent; text-align: center; padding-top: 1px; }
.nm { letter-spacing: -.38px; padding-right: 1px; }
.nm.mk { letter-spacing: -.5px; padding-right: 1px; }
.nm.vid { letter-spacing: -.15px; padding-right: 2px; }
.pic { width: 96px; height: 96px; margin: 0 0 0 3px; display: flex; align-items: center; justify-content: center; }
.framed { border: 1px solid #ddd; }
.tor { margin-top: 24px; }
.on { background: #e5f3fb; border-color: #70c0e7; }
.dfoot { height: 76px; background: #f0f0f0; position: relative; }
.fr1 { display: flex; padding: 9px 0 0 130px; }
.lab { width: 59px; line-height: 23px; letter-spacing: -.3px; }
.inp { width: 261px; height: 24px; border: 1px solid #ababab; background: #fff; display: flex; align-items: center; justify-content: flex-end; padding-right: 3px; margin-right: 12px; color: #555; }
.sel2 { width: 188px; height: 23px; border: 1px solid #acacac; background: linear-gradient(#f0f0f0, #e5e5e5); display: flex; align-items: center; justify-content: space-between; padding: 0 3px; letter-spacing: -.15px; }
.sel2 svg { color: #555; }
.fr2 { display: flex; gap: 14px; padding: 6px 0 0 463px; }
.db { width: 86px; height: 24px; border: 1px solid #acacac; background: linear-gradient(#f0f0f0, #e5e5e5); text-align: center; line-height: 22px; letter-spacing: -.15px; }
.open { border-color: #3c8cdc; display: flex; align-items: center; }
.open b { font-weight: normal; flex: 1; height: 18px; line-height: 17px; border-right: 1px solid #555; padding-right: 1px; }
.open i { width: 0; height: 0; border: 4.500px solid transparent; border-top: 5px solid #000; border-bottom: 0; margin: 0 2px; }
.grip { position: absolute; right: 2px; bottom: 1px; }
.tip { position: absolute; left: 390px; top: 356px; width: 185px; height: 50px; background: #fff; border: 1px solid #767676; box-shadow: 3px 3px 2px rgba(0,0,0,.45); color: #575757; padding: 1px 0 0 5px; letter-spacing: -.15px; }
.tip span { letter-spacing: -.38px; }

/* Taskbar */
.taskbar { height: 40px; background: linear-gradient(168deg, transparent 46%, rgba(50,20,70,.25) 47%, transparent 62%), linear-gradient(90deg, #8e50c0, #8443b4 30%, #7030a0 55%, #612590); border-top: 1px solid #7e4ca5; display: flex; align-items: center; color: #fff; font: 12px/17px "Open Sans", sans-serif; white-space: nowrap; }
.start { width: 52px; padding-left: 11px; }
.slot { width: 58px; height: 38px; margin-right: 4px; display: flex; align-items: center; justify-content: center; flex: none; }
.run { border: 1px solid rgba(235,215,250,.55); background: rgba(210,170,240,.25); }
.act { border-color: #fff; background: rgba(235,215,250,.45); }
.play { background: linear-gradient(90deg, #6aa878, #3cdf38) 0 0 / 52px 38px no-repeat, rgba(210,170,240,.25); }
.last { width: 54px; margin-right: 1px; }
.edge { width: 4px; height: 38px; border: 1px solid rgba(235,215,250,.55); border-left: 0; }
.tray { margin-left: auto; display: flex; align-items: center; padding-right: 20px; }
.tri { width: 0; height: 0; border: 4px solid transparent; border-bottom-color: #fff; border-top: 0; margin-right: 13px; }
.eng { font-size: 12px; margin-right: 19px; letter-spacing: -.3px; }
.clock { display: flex; flex-direction: column; align-items: center; letter-spacing: -.4px; }
```
